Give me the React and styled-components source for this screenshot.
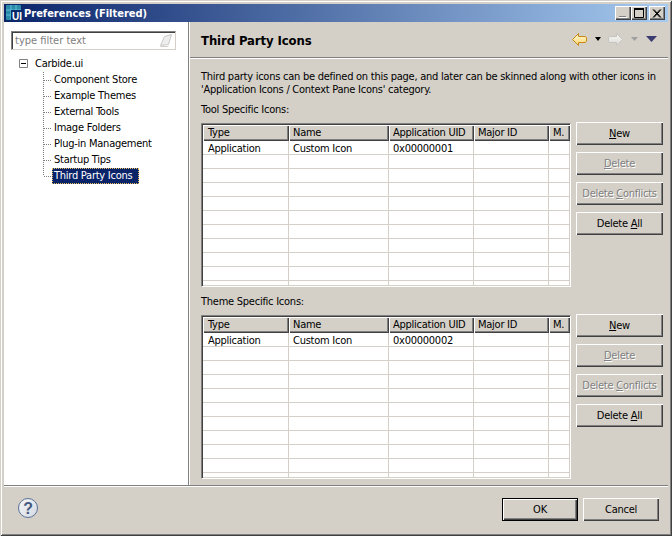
import styled, { createGlobalStyle } from "styled-components";

const GlobalStyle = createGlobalStyle`
  html, body {
    margin: 0;
    padding: 0;
    background: #d4d0c8;
  }
  * {
    box-sizing: border-box;
  }
`;

const Frame = styled.div`
  width: 672px;
  height: 536px;
  padding: 4px;
  display: flex;
  flex-direction: column;
  background: #d4d0c8;
  color: #000;
  font-family: "DejaVu Sans Condensed", "Liberation Sans", sans-serif;
  font-size: 11px;
  letter-spacing: -0.25px;
  line-height: 13px;
  box-shadow: inset 1px 1px #d4d0c8, inset -1px -1px #404040, inset 2px 2px #fff,
    inset -2px -2px #808080;
`;

const TitleBar = styled.div`
  height: 18px;
  flex: none;
  display: flex;
  align-items: center;
  background: linear-gradient(90deg, #0a246a, #a6caf0);
  color: #fff;
  font-size: 11px;
  font-weight: bold;
  letter-spacing: 0;
  padding: 0 3px 0 2px;
`;

const TitleText = styled.div`
  margin-left: 2px;
  flex: 1;
`;

const CaptionButton = styled.div`
  width: 16px;
  height: 14px;
  margin-left: ${(p) => (p.$gap ? "2px" : "0")};
  display: flex;
  align-items: center;
  justify-content: center;
  background: #d4d0c8;
  box-shadow: inset 1px 1px #fff, inset -1px -1px #404040, inset -2px -2px #808080;
`;

const Body = styled.div`
  height: 463px;
  flex: none;
  display: flex;
`;

const Sidebar = styled.div`
  width: 184px;
  flex: none;
  background: #fff;
  padding: 9px 0 0 7px;
`;

const FilterBox = styled.div`
  width: 165px;
  height: 19px;
  display: flex;
  align-items: center;
  justify-content: space-between;
  padding: 0 1px 0 3px;
  color: #808080;
  letter-spacing: 0;
  border: 1px solid;
  border-color: #808080 #d4d0c8 #d4d0c8 #808080;
  box-shadow: inset 1px 1px #404040;
`;

const Tree = styled.div`
  margin: 5px 0 0 8px;
`;

const TreeRoot = styled.div`
  height: 16px;
  display: flex;
  align-items: center;
  gap: 7px;
  margin-bottom: 1px;
`;

const Expander = styled.svg`
  width: 9px;
  height: 9px;
  display: block;
`;

const TreeItem = styled.div`
  height: 16px;
  display: flex;
  align-items: center;
  padding-left: 24px;
`;

const Connector = styled.svg`
  width: 9px;
  height: 16px;
  flex: none;
  display: block;
`;

const ItemLabel = styled.span`
  padding: 0 ${(p) => (p.$selected ? "7px" : "2px")} 0 2px;
  height: 16px;
  line-height: 15px;
  background: ${(p) => (p.$selected ? "#0a246a" : "transparent")};
  color: ${(p) => (p.$selected ? "#fff" : "#000")};
  outline: ${(p) => (p.$selected ? "1px dotted #e8c060" : "none")};
  outline-offset: -1px;
`;

const Sash = styled.div`
  width: 2px;
  flex: none;
  background: #fff;
  border-left: 1px solid #808080;
`;

const MainPane = styled.div`
  flex: 1;
  display: flex;
  flex-direction: column;
  min-width: 0;
`;

const PaneHeader = styled.div`
  height: 37px;
  flex: none;
  padding: 0 6px 2px 11px;
  display: flex;
  align-items: center;
  justify-content: space-between;
  border-bottom: 1px solid #fff;
  box-shadow: inset 0 -1px #808080;
`;

const PaneTitle = styled.div`
  font-size: 13px;
  font-weight: bold;
  letter-spacing: -0.1px;
  padding-top: 3px;
`;

const Toolbar = styled.div`
  display: flex;
  align-items: center;
  margin-right: 5px;
`;

const ToolbarCaret = styled.svg`
  width: ${(p) => p.$size}px;
  height: 4px;
  margin: 0 ${(p) => p.$after}px 0 ${(p) => p.$before}px;
`;

const PaneContent = styled.div`
  padding: 11px 5px 0 11px;
`;

const Description = styled.p`
  margin: 0 0 7px;
  white-space: nowrap;
`;

const Section = styled.section`
  margin-bottom: 8px;

  &:last-child {
    margin-bottom: 0;
  }
`;

const SectionLabel = styled.div`
  height: 13px;
  margin-bottom: 7px;
`;

const SectionRow = styled.div`
  display: flex;
  gap: 5px;
  align-items: flex-start;
`;

const TableFrame = styled.div`
  width: 370px;
  height: 164px;
  overflow: hidden;
  background: #fff;
  border: 1px solid;
  border-color: #808080 #fff #fff #808080;
  box-shadow: inset 1px 1px #404040, inset -1px -1px #d4d0c8;
  padding: 1px 0 0 1px;
`;

const Row = styled.div`
  display: grid;
  grid-template-columns: 86px 100px 85px 75px 21px;
`;

const HeaderCell = styled.div`
  height: 16px;
  padding: 1px 0 0 4px;
  background: #d4d0c8;
  white-space: nowrap;
  overflow: hidden;
  box-shadow: inset 1px 1px #fff, inset -1px -1px #404040, inset -2px -2px #808080;

  &:first-child {
    padding-left: 5px;
  }
`;

const Cell = styled.div`
  height: 14px;
  padding: 1px 0 0 4px;
  line-height: 13px;
  white-space: nowrap;
  border-right: 1px solid #d4d0c8;
  border-bottom: 1px solid #d4d0c8;

  &:first-child {
    padding-left: 5px;
  }
`;

const ButtonColumn = styled.div`
  display: flex;
  flex-direction: column;
  gap: 7px;
  margin-top: -1px;
`;

const PushButton = styled.button`
  width: ${(p) => p.$width || 87}px;
  height: 23px;
  padding: 0;
  border: 0;
  background: #d4d0c8;
  color: ${(p) => (p.disabled ? "#808080" : "#000")};
  text-shadow: ${(p) => (p.disabled ? "1px 1px #fff" : "none")};
  font: inherit;
  letter-spacing: inherit;
  box-shadow: ${(p) =>
    p.$isDefault
      ? "inset 0 0 0 1px #000, inset 2px 2px #fff, inset -2px -2px #404040, inset -3px -3px #808080"
      : "inset 1px 1px #fff, inset -1px -1px #404040, inset -2px -2px #808080"};
`;

const Footer = styled.div`
  flex: 1;
  display: flex;
  align-items: flex-start;
  justify-content: space-between;
  padding: 12px 5px 0 13px;
  border-top: 1px solid #808080;
  box-shadow: inset 0 1px #fff;
`;

const FooterButtons = styled.div`
  display: flex;
  gap: 5px;
  margin-right: 4px;
`;

const HelpIcon = styled.svg`
  width: 22px;
  height: 22px;
  margin-top: -1px;
  display: block;
`;

const COLUMNS = ["Type", "Name", "Application UID", "Major ID", "M."];

function AppIcon() {
  return (
    <svg width="16" height="16" viewBox="0 0 16 16">
      <rect x="0" y="0" width="15" height="15" rx="1" fill="#2a8aa8" />
      <path d="M0 5h15M0 10h15M5 0v15M10 0v15" stroke="#5cc0d8" />
      <rect x="5" y="5" width="11" height="11" fill="#0a2a6a" />
      <text x="6" y="15" fill="#fff" fontSize="10" fontFamily="Liberation Sans">UI</text>
    </svg>
  );
}

function MinimizeGlyph() {
  return (
    <svg width="10" height="9" viewBox="0 0 10 9">
      <path d="M1 7h7v1H1z" fill="#808080" />
      <path d="M1 8h8v1H1z" fill="#fff" />
    </svg>
  );
}

function MaximizeGlyph() {
  return (
    <svg width="10" height="10" viewBox="0 0 10 10">
      <path d="M0.5 1.5h9v8h-9z" fill="none" stroke="#000" />
      <path d="M0 1h10" stroke="#000" strokeWidth="2" />
    </svg>
  );
}

function CloseGlyph() {
  return (
    <svg width="10" height="9" viewBox="0 0 10 9">
      <path d="M1 0.5l7 8M2 0.5l7 8M8 0.5l-7 8M9 0.5l-7 8" stroke="#000" />
    </svg>
  );
}

function EraserIcon() {
  return (
    <svg width="15" height="15" viewBox="0 0 15 15">
      <path d="M1.5 12.5l4-9 7-2-3 10z" fill="#eee" stroke="#c8c8c8" />
      <path d="M1.5 13.5h8" stroke="#d4d0c8" />
    </svg>
  );
}

function BackArrow() {
  return (
    <svg width="15" height="13" viewBox="0 0 15 13">
      <defs>
        <linearGradient id="backFill" x1="0" y1="0" x2="0" y2="1">
          <stop offset="0" stopColor="#fff8d8" />
          <stop offset="1" stopColor="#fbd870" />
        </linearGradient>
      </defs>
      <path
        d="M0.5 6.5L6.5 0.5V3.5H13.5L14.5 5V8L13.5 9.5H6.5V12.5z"
        fill="url(#backFill)"
        stroke="#c88818"
      />
    </svg>
  );
}

function ForwardArrow() {
  return (
    <svg width="15" height="13" viewBox="0 0 15 13">
      <defs>
        <linearGradient id="forwardFill" x1="0" y1="0" x2="0" y2="1">
          <stop offset="0" stopColor="#f8f8f6" />
          <stop offset="1" stopColor="#dcdad6" />
        </linearGradient>
      </defs>
      <path
        d="M14.5 6.5L8.5 0.5V3.5H1.5L0.5 5V8L1.5 9.5H8.5V12.5z"
        fill="url(#forwardFill)"
        stroke="#c4c4c0"
      />
    </svg>
  );
}

function MenuCaret() {
  return (
    <svg width="11" height="6" viewBox="0 0 11 6">
      <path d="M0 0h11L5.5 6z" fill="#3c3c70" />
    </svg>
  );
}

function HelpGlyph() {
  return (
    <HelpIcon viewBox="0 0 22 22">
      <defs>
        <linearGradient id="helpFill" x1="0" y1="0" x2="1" y2="1">
          <stop offset="0" stopColor="#f6f7f8" />
          <stop offset="1" stopColor="#d4dae2" />
        </linearGradient>
      </defs>
      <circle cx="11" cy="11" r="9.5" fill="url(#helpFill)" stroke="#5a7098" />
      <text x="11" y="16.5" textAnchor="middle" fontSize="16" fontWeight="bold" fontFamily="Liberation Sans" fill="#465a80">
        ?
      </text>
    </HelpIcon>
  );
}

function IconTable({ uid }) {
  const rows = Array.from({ length: 11 });
  return (
    <TableFrame>
      <Row>
        {COLUMNS.map((name) => (
          <HeaderCell key={name}>{name}</HeaderCell>
        ))}
      </Row>
      {rows.map((_, i) => {
        const values = i === 0 ? ["Application", "Custom Icon", uid, "", ""] : ["", "", "", "", ""];
        return (
          <Row key={i}>
            {values.map((value, j) => (
              <Cell key={j}>{value}</Cell>
            ))}
          </Row>
        );
      })}
    </TableFrame>
  );
}

function IconSection({ label, uid }) {
  return (
    <Section>
      <SectionLabel>{label}</SectionLabel>
      <SectionRow>
        <IconTable uid={uid} />
        <ButtonColumn>
          <PushButton>
            <u>N</u>ew
          </PushButton>
          <PushButton disabled>
            <u>D</u>elete
          </PushButton>
          <PushButton disabled>
            Delete <u>C</u>onflicts
          </PushButton>
          <PushButton>
            Delete <u>A</u>ll
          </PushButton>
        </ButtonColumn>
      </SectionRow>
    </Section>
  );
}

const TREE_ITEMS = [
  "Component Store",
  "Example Themes",
  "External Tools",
  "Image Folders",
  "Plug-in Management",
  "Startup Tips",
  "Third Party Icons",
];

export default function App() {
  return (
    <>
      <GlobalStyle />
      <Frame>
        <TitleBar>
          <AppIcon />
          <TitleText>Preferences (Filtered)</TitleText>
          <CaptionButton>
            <MinimizeGlyph />
          </CaptionButton>
          <CaptionButton>
            <MaximizeGlyph />
          </CaptionButton>
          <CaptionButton $gap>
            <CloseGlyph />
          </CaptionButton>
        </TitleBar>
        <Body>
          <Sidebar>
            <FilterBox>
              type filter text
              <EraserIcon />
            </FilterBox>
            <Tree>
              <TreeRoot>
                <Expander viewBox="0 0 9 9">
                  <path d="M0.5 0.5h8v8h-8z" fill="#fff" stroke="#808080" />
                  <path d="M2 4.5h5" stroke="#000" />
                </Expander>
                Carbide.ui
              </TreeRoot>
              {TREE_ITEMS.map((item, i) => {
                const last = i === TREE_ITEMS.length - 1;
                return (
                  <TreeItem key={item}>
                    <Connector viewBox="0 0 9 16">
                      <path
                        d={last ? "M0.5 0V8" : "M0.5 0V16"}
                        stroke="#808080"
                        strokeDasharray="1 1"
                      />
                      <path d="M1 8.5H9" stroke="#808080" strokeDasharray="1 1" />
                    </Connector>
                    <ItemLabel $selected={last}>{item}</ItemLabel>
                  </TreeItem>
                );
              })}
            </Tree>
          </Sidebar>
          <Sash />
          <MainPane>
            <PaneHeader>
              <PaneTitle>Third Party Icons</PaneTitle>
              <Toolbar>
                <BackArrow />
                <ToolbarCaret viewBox="0 0 6 4" $size={6} $before={8} $after={7}>
                  <path d="M0 0h6L3 4z" fill="#000" />
                </ToolbarCaret>
                <ForwardArrow />
                <ToolbarCaret viewBox="0 0 7 4" $size={7} $before={8} $after={8}>
                  <path d="M0 0h7L3.5 4z" fill="#a0a0a0" />
                </ToolbarCaret>
                <MenuCaret />
              </Toolbar>
            </PaneHeader>
            <PaneContent>
              <Description>
                Third party icons can be defined on this page, and later can be skinned along with other icons in
                <br />
                'Application Icons / Context Pane Icons' category.
              </Description>
              <IconSection label="Tool Specific Icons:" uid="0x00000001" />
              <IconSection label="Theme Specific Icons:" uid="0x00000002" />
            </PaneContent>
          </MainPane>
        </Body>
        <Footer>
          <HelpGlyph />
          <FooterButtons>
            <PushButton $width={76} $isDefault>
              OK
            </PushButton>
            <PushButton $width={76}>Cancel</PushButton>
          </FooterButtons>
        </Footer>
      </Frame>
    </>
  );
}
